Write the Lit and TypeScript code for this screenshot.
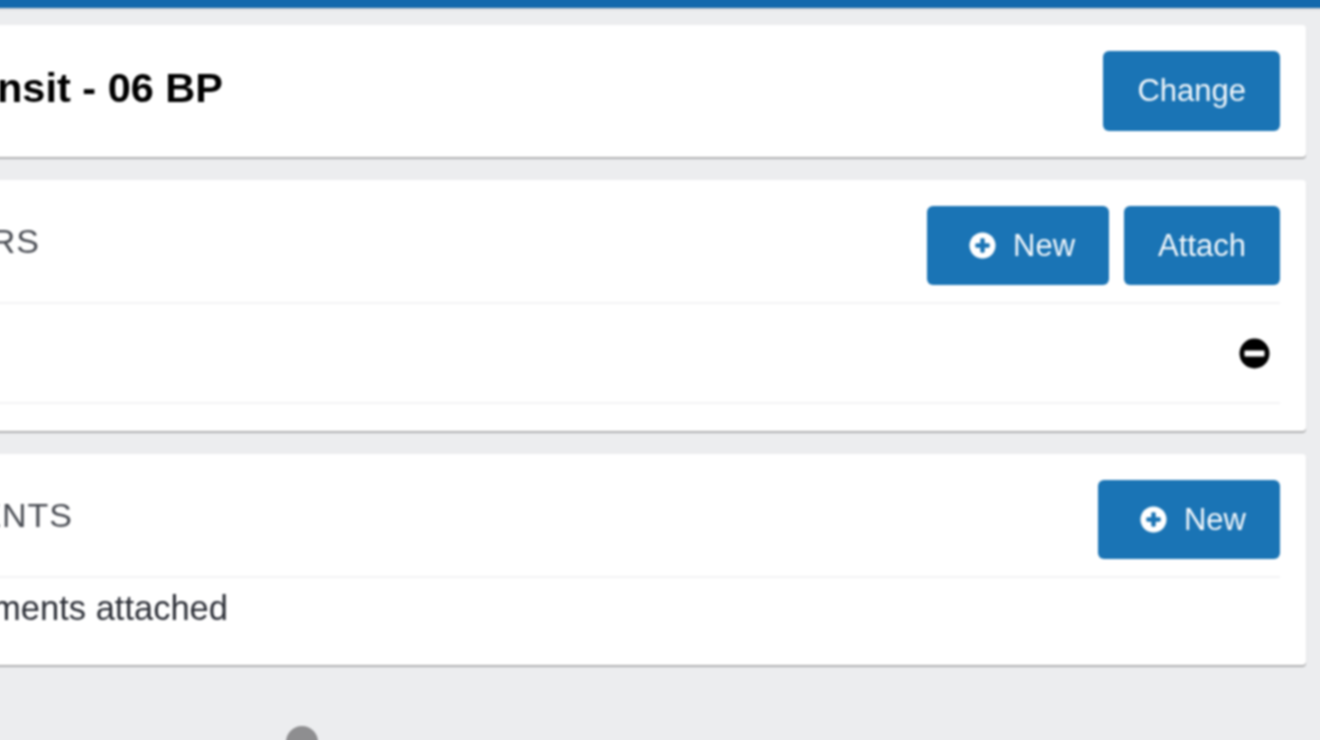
import { LitElement, html, css } from "lit";
import { customElement } from "lit/decorators.js";

@customElement("app-root")
export class AppRoot extends LitElement {
  static styles = css`
    :host {
      display: block;
      width: 1320px;
      height: 740px;
      overflow: hidden;
      background: #ecedef;
      font-family: "Liberation Sans", Arial, sans-serif;
    }
    /* The soft focus of the picture; the page runs 4px past each window edge
       so that the blur does not fade out at the edges. */
    .page {
      width: 1328px;
      height: 748px;
      margin: -4px;
      overflow: hidden;
      display: flex;
      flex-direction: column;
      background: #ecedef;
      filter: blur(0.8px);
    }
    .topbar {
      flex: none;
      height: 12px;
      background: #1269ad;
      box-shadow: 0 1px 2px rgba(0, 0, 0, 0.15);
    }
    .content {
      display: flex;
      flex-direction: column;
      padding: 17px 18px 0 0;
    }
    .card {
      background: #fff;
      border-radius: 0 4px 4px 0;
      box-shadow: 0 2px 1px rgba(0, 0, 0, 0.26);
      padding: 0 26px 0 0;
    }
    .card + .card {
      margin-top: 23px;
    }
    .row {
      display: flex;
      align-items: center;
      justify-content: space-between;
    }
    .title-card {
      height: 132px;
      padding-top: 26px;
      box-sizing: border-box;
      align-items: flex-start;
    }
    /* Text whose start runs past the left edge of the window */
    .end {
      display: flex;
      justify-content: flex-end;
      white-space: nowrap;
    }
    .title {
      width: 227px;
      margin-top: 14px;
      font-size: 41.5px;
      line-height: 46px;
      font-weight: 700;
      color: #000;
    }
    .head {
      height: 124px;
      padding-top: 26px;
      box-sizing: border-box;
      align-items: flex-start;
      border-bottom: 2px solid #f3f3f4;
    }
    .head-drivers .label {
      width: 44px;
    }
    .head-docs .label {
      width: 77px;
    }
    .label {
      margin-top: 15px;
      font-size: 34px;
      line-height: 40px;
      letter-spacing: 1px;
      color: #4a4d54;
    }
    .buttons {
      display: flex;
      gap: 15px;
    }
    .btn {
      height: 79px;
      padding: 0 34px;
      display: flex;
      align-items: center;
      box-sizing: border-box;
      background: #1a74b5;
      color: #f2f7fb;
      border: 0;
      border-radius: 6px;
      font-family: inherit;
      font-size: 31px;
    }
    .btn.tall {
      height: 80px;
    }
    .btn svg {
      width: 27px;
      height: 27px;
      margin: 0 17px 0 8px;
      flex: none;
    }
    .item {
      height: 100px;
      justify-content: flex-end;
      border-bottom: 2px solid #f3f3f4;
      box-sizing: border-box;
      padding-right: 10px;
    }
    .item svg {
      width: 31px;
      height: 31px;
    }
    .spacer {
      height: 27px;
    }
    .empty {
      width: 232px;
      height: 87px;
      padding-top: 10px;
      box-sizing: border-box;
      font-size: 34.5px;
      line-height: 40px;
      color: #2c2f37;
    }
    .pager {
      padding: 61px 0 0 290px;
    }
    .dot {
      width: 32px;
      height: 32px;
      border-radius: 50%;
      background: #8e8e90;
    }
  `;

  private plus() {
    return html`<svg viewBox="0 0 28 28" aria-hidden="true">
      <circle cx="14" cy="14" r="13.5" fill="#fff"></circle>
      <rect x="11.7" y="6.5" width="4.6" height="15" rx="1.5" fill="#1a74b5"></rect>
      <rect x="6.5" y="11.7" width="15" height="4.6" rx="1.5" fill="#1a74b5"></rect>
    </svg>`;
  }

  render() {
    return html`
      <div class="page">
        <div class="topbar"></div>
        <div class="content">
          <section class="card row title-card">
            <div class="end title"><span>Transit - 06 BP</span></div>
            <button class="btn tall">Change</button>
          </section>

          <section class="card">
            <div class="row head head-drivers">
              <div class="end label"><span>DRIVERS</span></div>
              <div class="buttons">
                <button class="btn">${this.plus()}New</button>
                <button class="btn">Attach</button>
              </div>
            </div>
            <div class="row item">
              <svg viewBox="0 0 31 31" aria-hidden="true">
                <circle cx="15.5" cy="15.5" r="15" fill="#000"></circle>
                <rect x="5.5" y="12.5" width="20" height="6" rx="1" fill="#fff"></rect>
              </svg>
            </div>
            <div class="spacer"></div>
          </section>

          <section class="card">
            <div class="row head head-docs">
              <div class="end label"><span>DOCUMENTS</span></div>
              <button class="btn">${this.plus()}New</button>
            </div>
            <div class="end empty"><span>No documents attached</span></div>
          </section>
        </div>
        <div class="pager"><div class="dot"></div></div>
      </div>
    `;
  }
}
